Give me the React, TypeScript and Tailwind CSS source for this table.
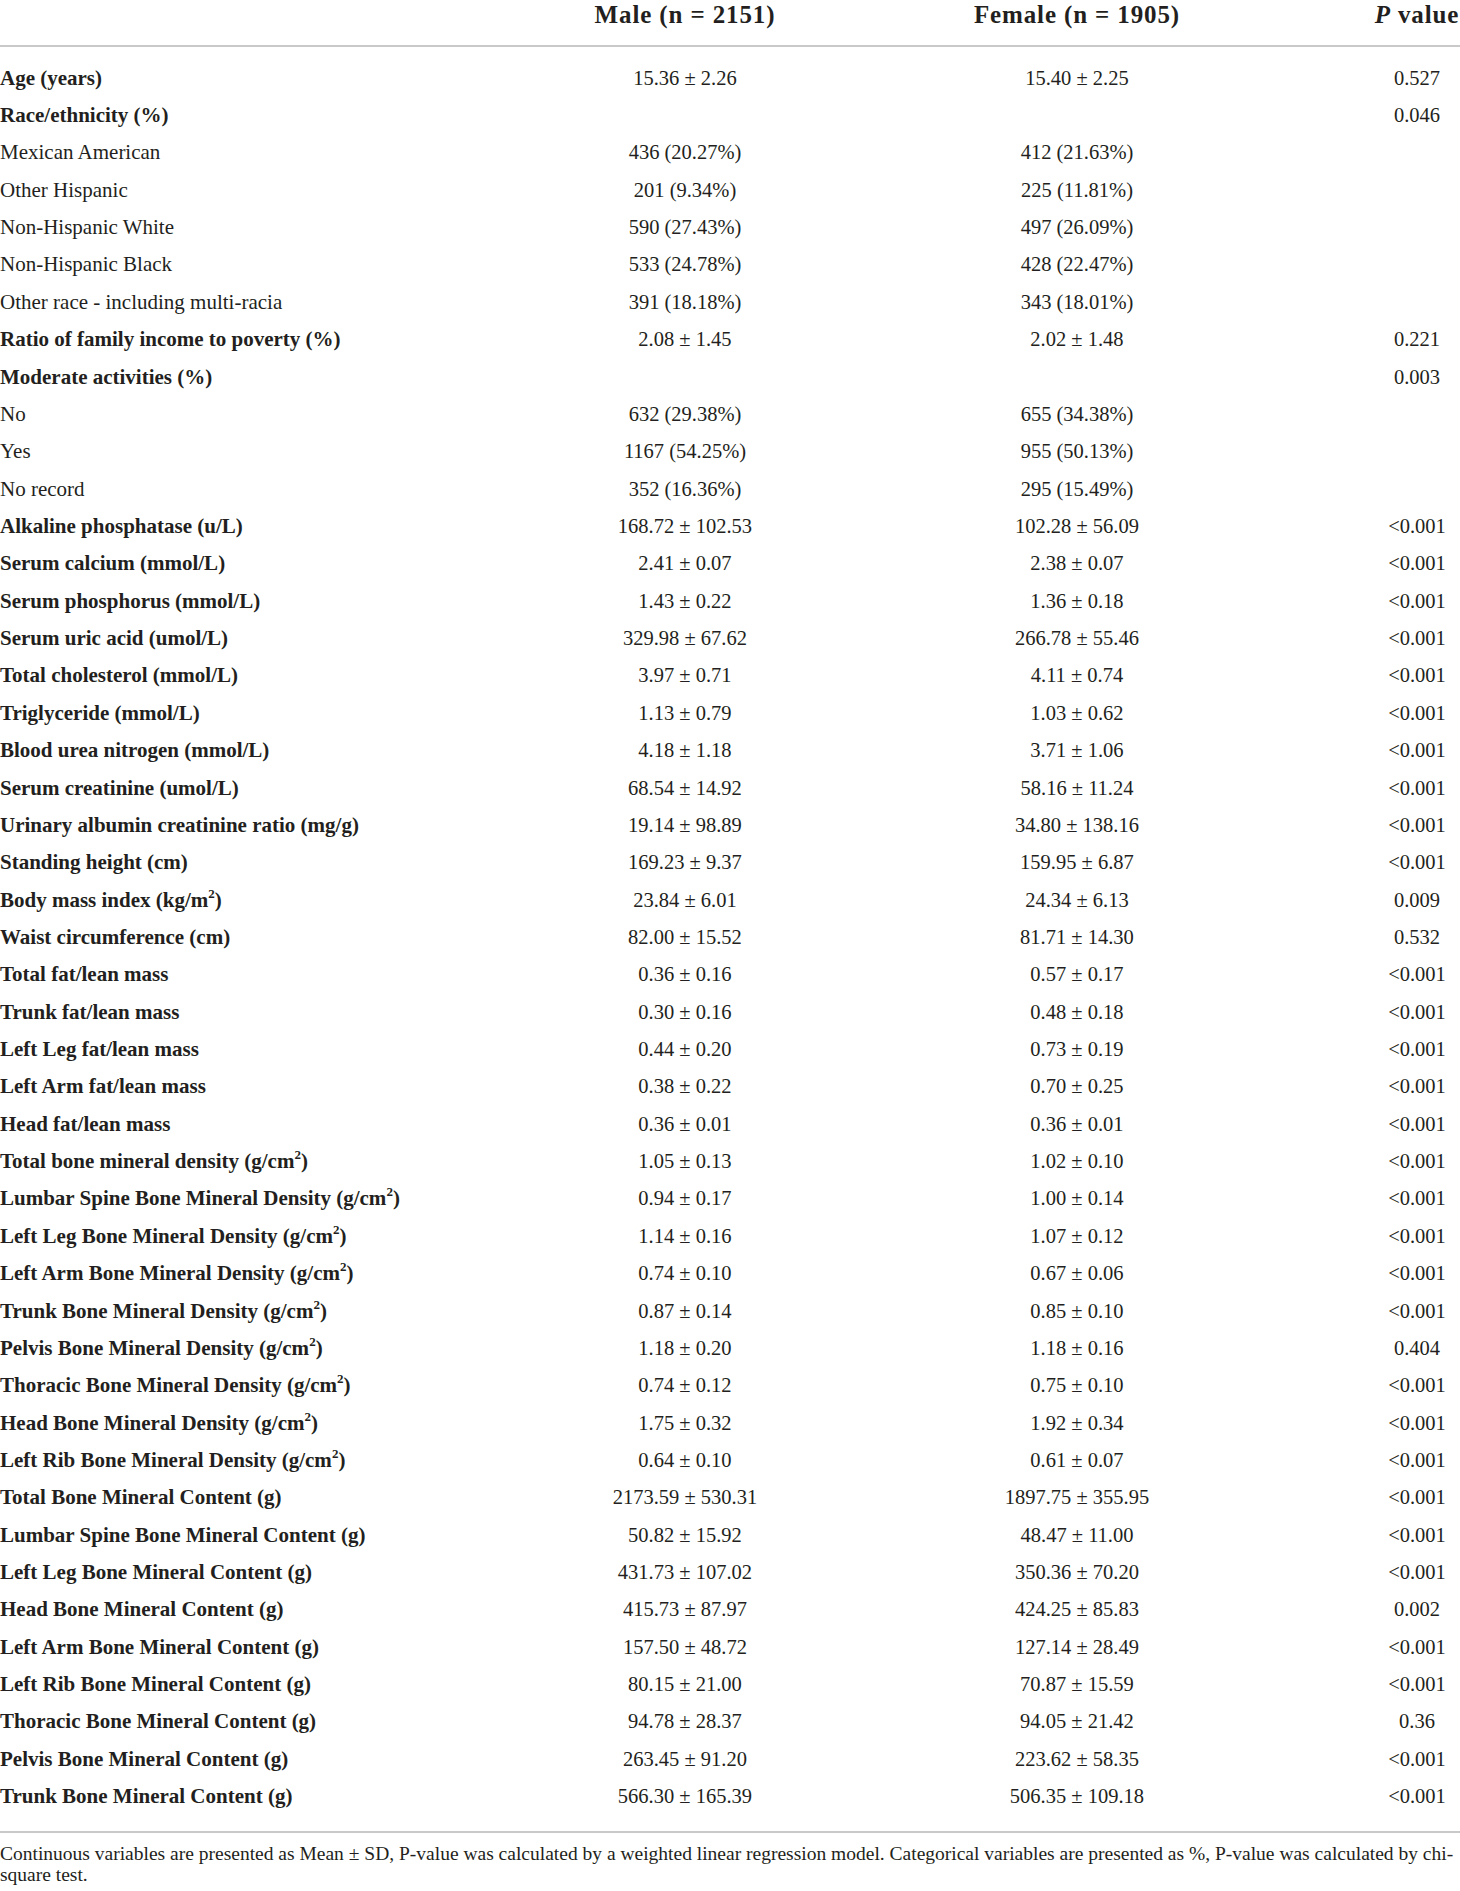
import React from 'react';

type Row = { label: React.ReactNode; male?: string; female?: string; p?: string; bold?: boolean };

const sq = <sup className="text-[13px] relative -top-[9px]">2</sup>;

const rows: Row[] = [
  { label: 'Age (years)', male: '15.36 ± 2.26', female: '15.40 ± 2.25', p: '0.527', bold: true },
  { label: 'Race/ethnicity (%)', p: '0.046', bold: true },
  { label: 'Mexican American', male: '436 (20.27%)', female: '412 (21.63%)' },
  { label: 'Other Hispanic', male: '201 (9.34%)', female: '225 (11.81%)' },
  { label: 'Non-Hispanic White', male: '590 (27.43%)', female: '497 (26.09%)' },
  { label: 'Non-Hispanic Black', male: '533 (24.78%)', female: '428 (22.47%)' },
  { label: 'Other race - including multi-racia', male: '391 (18.18%)', female: '343 (18.01%)' },
  { label: 'Ratio of family income to poverty (%)', male: '2.08 ± 1.45', female: '2.02 ± 1.48', p: '0.221', bold: true },
  { label: 'Moderate activities (%)', p: '0.003', bold: true },
  { label: 'No', male: '632 (29.38%)', female: '655 (34.38%)' },
  { label: 'Yes', male: '1167 (54.25%)', female: '955 (50.13%)' },
  { label: 'No record', male: '352 (16.36%)', female: '295 (15.49%)' },
  { label: 'Alkaline phosphatase (u/L)', male: '168.72 ± 102.53', female: '102.28 ± 56.09', p: '<0.001', bold: true },
  { label: 'Serum calcium (mmol/L)', male: '2.41 ± 0.07', female: '2.38 ± 0.07', p: '<0.001', bold: true },
  { label: 'Serum phosphorus (mmol/L)', male: '1.43 ± 0.22', female: '1.36 ± 0.18', p: '<0.001', bold: true },
  { label: 'Serum uric acid (umol/L)', male: '329.98 ± 67.62', female: '266.78 ± 55.46', p: '<0.001', bold: true },
  { label: 'Total cholesterol (mmol/L)', male: '3.97 ± 0.71', female: '4.11 ± 0.74', p: '<0.001', bold: true },
  { label: 'Triglyceride (mmol/L)', male: '1.13 ± 0.79', female: '1.03 ± 0.62', p: '<0.001', bold: true },
  { label: 'Blood urea nitrogen (mmol/L)', male: '4.18 ± 1.18', female: '3.71 ± 1.06', p: '<0.001', bold: true },
  { label: 'Serum creatinine (umol/L)', male: '68.54 ± 14.92', female: '58.16 ± 11.24', p: '<0.001', bold: true },
  { label: 'Urinary albumin creatinine ratio (mg/g)', male: '19.14 ± 98.89', female: '34.80 ± 138.16', p: '<0.001', bold: true },
  { label: 'Standing height (cm)', male: '169.23 ± 9.37', female: '159.95 ± 6.87', p: '<0.001', bold: true },
  { label: <>Body mass index (kg/m{sq})</>, male: '23.84 ± 6.01', female: '24.34 ± 6.13', p: '0.009', bold: true },
  { label: 'Waist circumference (cm)', male: '82.00 ± 15.52', female: '81.71 ± 14.30', p: '0.532', bold: true },
  { label: 'Total fat/lean mass', male: '0.36 ± 0.16', female: '0.57 ± 0.17', p: '<0.001', bold: true },
  { label: 'Trunk fat/lean mass', male: '0.30 ± 0.16', female: '0.48 ± 0.18', p: '<0.001', bold: true },
  { label: 'Left Leg fat/lean mass', male: '0.44 ± 0.20', female: '0.73 ± 0.19', p: '<0.001', bold: true },
  { label: 'Left Arm fat/lean mass', male: '0.38 ± 0.22', female: '0.70 ± 0.25', p: '<0.001', bold: true },
  { label: 'Head fat/lean mass', male: '0.36 ± 0.01', female: '0.36 ± 0.01', p: '<0.001', bold: true },
  { label: <>Total bone mineral density (g/cm{sq})</>, male: '1.05 ± 0.13', female: '1.02 ± 0.10', p: '<0.001', bold: true },
  { label: <>Lumbar Spine Bone Mineral Density (g/cm{sq})</>, male: '0.94 ± 0.17', female: '1.00 ± 0.14', p: '<0.001', bold: true },
  { label: <>Left Leg Bone Mineral Density (g/cm{sq})</>, male: '1.14 ± 0.16', female: '1.07 ± 0.12', p: '<0.001', bold: true },
  { label: <>Left Arm Bone Mineral Density (g/cm{sq})</>, male: '0.74 ± 0.10', female: '0.67 ± 0.06', p: '<0.001', bold: true },
  { label: <>Trunk Bone Mineral Density (g/cm{sq})</>, male: '0.87 ± 0.14', female: '0.85 ± 0.10', p: '<0.001', bold: true },
  { label: <>Pelvis Bone Mineral Density (g/cm{sq})</>, male: '1.18 ± 0.20', female: '1.18 ± 0.16', p: '0.404', bold: true },
  { label: <>Thoracic Bone Mineral Density (g/cm{sq})</>, male: '0.74 ± 0.12', female: '0.75 ± 0.10', p: '<0.001', bold: true },
  { label: <>Head Bone Mineral Density (g/cm{sq})</>, male: '1.75 ± 0.32', female: '1.92 ± 0.34', p: '<0.001', bold: true },
  { label: <>Left Rib Bone Mineral Density (g/cm{sq})</>, male: '0.64 ± 0.10', female: '0.61 ± 0.07', p: '<0.001', bold: true },
  { label: 'Total Bone Mineral Content (g)', male: '2173.59 ± 530.31', female: '1897.75 ± 355.95', p: '<0.001', bold: true },
  { label: 'Lumbar Spine Bone Mineral Content (g)', male: '50.82 ± 15.92', female: '48.47 ± 11.00', p: '<0.001', bold: true },
  { label: 'Left Leg Bone Mineral Content (g)', male: '431.73 ± 107.02', female: '350.36 ± 70.20', p: '<0.001', bold: true },
  { label: 'Head Bone Mineral Content (g)', male: '415.73 ± 87.97', female: '424.25 ± 85.83', p: '0.002', bold: true },
  { label: 'Left Arm Bone Mineral Content (g)', male: '157.50 ± 48.72', female: '127.14 ± 28.49', p: '<0.001', bold: true },
  { label: 'Left Rib Bone Mineral Content (g)', male: '80.15 ± 21.00', female: '70.87 ± 15.59', p: '<0.001', bold: true },
  { label: 'Thoracic Bone Mineral Content (g)', male: '94.78 ± 28.37', female: '94.05 ± 21.42', p: '0.36', bold: true },
  { label: 'Pelvis Bone Mineral Content (g)', male: '263.45 ± 91.20', female: '223.62 ± 58.35', p: '<0.001', bold: true },
  { label: 'Trunk Bone Mineral Content (g)', male: '566.30 ± 165.39', female: '506.35 ± 109.18', p: '<0.001', bold: true },
];

const cols = 'grid grid-cols-[590px_190px_594px_86px]';

export default function App() {
  return (
    <div className="w-[1460px] bg-white text-[#231f20] font-['Liberation_Serif',serif]">
      <div className={`${cols} h-[45px] items-start text-[25px] font-bold leading-[30px] tracking-[0.035em]`}>
        <div />
        <div className="text-center whitespace-nowrap">Male (n = 2151)</div>
        <div className="text-center whitespace-nowrap">Female (n = 1905)</div>
        <div className="text-center whitespace-nowrap"><i>P</i> value</div>
      </div>
      <div className="h-[2px] bg-[#c9c9c9]" />
      <div className="pt-[12px] pb-[16px]">
        {rows.map((r, i) => (
          <div key={i} className={`${cols} h-[37.37px] items-center leading-[26px]`}>
            <div className={`whitespace-nowrap text-[21px] ${r.bold ? 'font-bold' : ''}`}>{r.label}</div>
            <div className="text-center whitespace-nowrap text-[20.5px]">{r.male}</div>
            <div className="text-center whitespace-nowrap text-[20.5px]">{r.female}</div>
            <div className="text-center whitespace-nowrap text-[20.5px]">{r.p}</div>
          </div>
        ))}
      </div>
      <div className="h-[2px] bg-[#c9c9c9]" />
      <div className="pt-[10px] text-[19.5px] leading-[21px]">
        <div className="whitespace-nowrap">
          Continuous variables are presented as Mean ± SD, P-value was calculated by a weighted linear regression model. Categorical variables are presented as %, P-value was calculated by chi-
        </div>
        <div>square test.</div>
      </div>
    </div>
  );
}
